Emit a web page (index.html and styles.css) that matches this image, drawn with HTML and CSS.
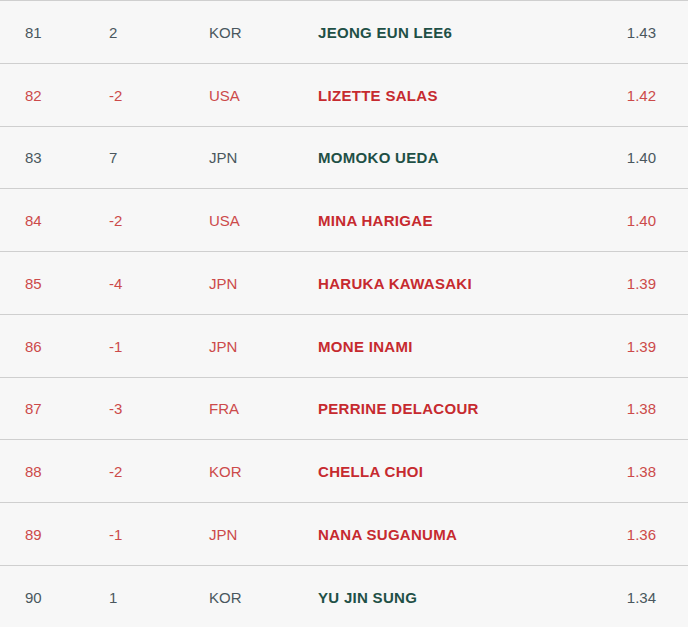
FILE: index.html
```html
<!DOCTYPE html>
<html>
<head>
<meta charset="utf-8">
<link rel="stylesheet" href="styles.css">
</head>
<body>
<div class="table">
  <div class="row up"><span>81</span><span>2</span><span>KOR</span><span class="name">JEONG EUN LEE6</span><span class="score">1.43</span></div>
  <div class="row down"><span>82</span><span>-2</span><span>USA</span><span class="name">LIZETTE SALAS</span><span class="score">1.42</span></div>
  <div class="row up"><span>83</span><span>7</span><span>JPN</span><span class="name">MOMOKO UEDA</span><span class="score">1.40</span></div>
  <div class="row down"><span>84</span><span>-2</span><span>USA</span><span class="name">MINA HARIGAE</span><span class="score">1.40</span></div>
  <div class="row down"><span>85</span><span>-4</span><span>JPN</span><span class="name">HARUKA KAWASAKI</span><span class="score">1.39</span></div>
  <div class="row down"><span>86</span><span>-1</span><span>JPN</span><span class="name">MONE INAMI</span><span class="score">1.39</span></div>
  <div class="row down"><span>87</span><span>-3</span><span>FRA</span><span class="name">PERRINE DELACOUR</span><span class="score">1.38</span></div>
  <div class="row down"><span>88</span><span>-2</span><span>KOR</span><span class="name">CHELLA CHOI</span><span class="score">1.38</span></div>
  <div class="row down"><span>89</span><span>-1</span><span>JPN</span><span class="name">NANA SUGANUMA</span><span class="score">1.36</span></div>
  <div class="row up"><span>90</span><span>1</span><span>KOR</span><span class="name">YU JIN SUNG</span><span class="score">1.34</span></div>
</div>
</body>
</html>
```
FILE: styles.css
```css
html, body {
  margin: 0;
  padding: 0;
  background: #f7f7f7;
}
body {
  font-family: "Liberation Sans", Arial, sans-serif;
  font-size: 15px;
  width: 688px;
  height: 627px;
  overflow: hidden;
}
.table {
  display: flex;
  flex-direction: column;
}
.row {
  display: grid;
  grid-template-columns: 84px 100px 109px 1fr auto;
  align-items: center;
  height: 60.75px;
  border-top: 1px solid #cfcfcf;
  padding: 1px 32px 0 25px;
  box-sizing: content-box;
}
.row.up {
  color: #4a575e;
}
.row.down {
  color: #cc4a4a;
}
.name {
  font-weight: bold;
  letter-spacing: 0.3px;
}
.row.up .name {
  color: #1f5046;
}
.row.down .name {
  color: #c62a2f;
}
.score {
  text-align: right;
}
```
